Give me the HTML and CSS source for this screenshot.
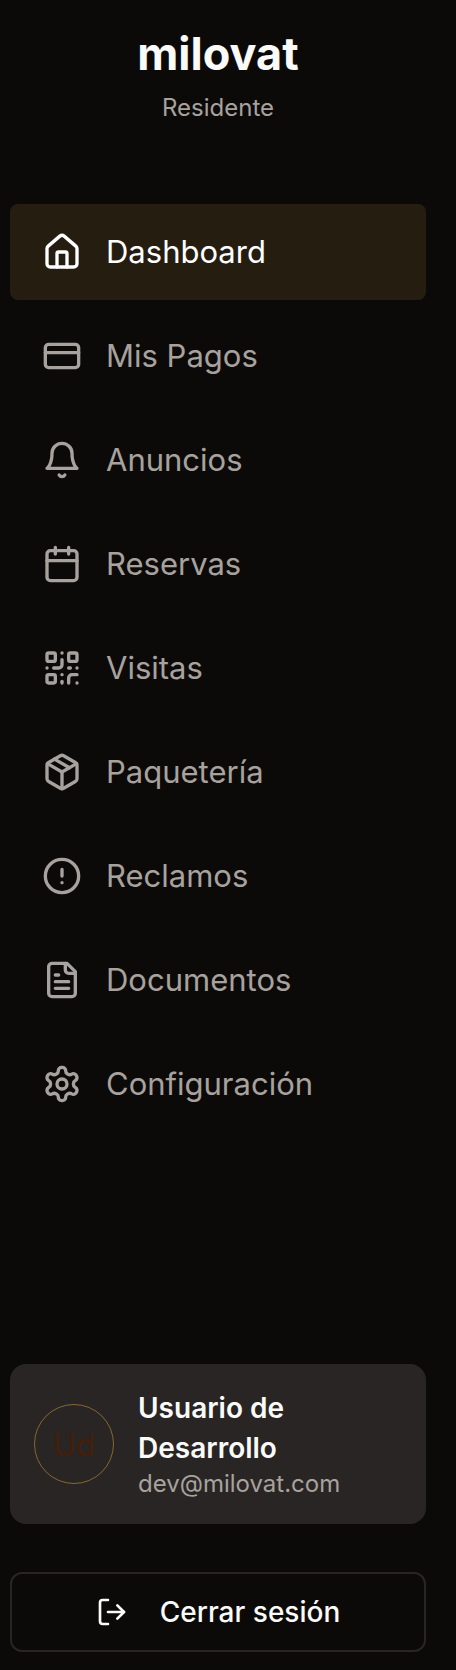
FILE: index.html
```html
<!DOCTYPE html>
<html lang="es">
<head>
<meta charset="utf-8">
<meta name="viewport" content="width=device-width, initial-scale=1">
<title>milovat</title>
<link rel="stylesheet" href="styles.css">
</head>
<body>
<aside class="sidebar">
  <header class="brand">
    <h1 class="brand-name">milovat</h1>
    <p class="brand-role">Residente</p>
  </header>
  <nav class="nav" aria-label="Principal">
    <a class="nav-link active" href="#dashboard" aria-current="page">
      <svg class="icon" viewBox="0 0 24 24" aria-hidden="true"><path d="M15 21v-8a1 1 0 0 0-1-1h-4a1 1 0 0 0-1 1v8"/><path d="M3 10a2 2 0 0 1 .709-1.528l7-5.999a2 2 0 0 1 2.582 0l7 5.999A2 2 0 0 1 21 10v9a2 2 0 0 1-2 2H5a2 2 0 0 1-2-2z"/></svg>
      <span>Dashboard</span>
    </a>
    <a class="nav-link" href="#pagos">
      <svg class="icon" viewBox="0 0 24 24" aria-hidden="true"><rect width="20" height="14" x="2" y="5" rx="2"/><path d="M2 10h20"/></svg>
      <span>Mis Pagos</span>
    </a>
    <a class="nav-link" href="#anuncios">
      <svg class="icon" viewBox="0 0 24 24" aria-hidden="true"><path d="M6 8a6 6 0 0 1 12 0c0 7 3 9 3 9H3s3-2 3-9"/><path d="M10.3 21a1.94 1.94 0 0 0 3.4 0"/></svg>
      <span>Anuncios</span>
    </a>
    <a class="nav-link" href="#reservas">
      <svg class="icon" viewBox="0 0 24 24" aria-hidden="true"><path d="M8 2v4M16 2v4"/><rect width="18" height="18" x="3" y="4" rx="2"/><path d="M3 10h18"/></svg>
      <span>Reservas</span>
    </a>
    <a class="nav-link" href="#visitas">
      <svg class="icon" viewBox="0 0 24 24" aria-hidden="true"><rect width="5" height="5" x="3" y="3" rx="1"/><rect width="5" height="5" x="16" y="3" rx="1"/><rect width="5" height="5" x="3" y="16" rx="1"/><path d="M21 16h-3a2 2 0 0 0-2 2v3"/><path d="M21 21v.01"/><path d="M12 7v3a2 2 0 0 1-2 2H7"/><path d="M3 12h.01"/><path d="M12 3h.01"/><path d="M12 16v.01"/><path d="M16 12h1"/><path d="M21 12v.01"/><path d="M12 21v-1"/></svg>
      <span>Visitas</span>
    </a>
    <a class="nav-link" href="#paqueteria">
      <svg class="icon" viewBox="0 0 24 24" aria-hidden="true"><path d="m7.5 4.27 9 5.15"/><path d="M21 8a2 2 0 0 0-1-1.73l-7-4a2 2 0 0 0-2 0l-7 4A2 2 0 0 0 3 8v8a2 2 0 0 0 1 1.73l7 4a2 2 0 0 0 2 0l7-4A2 2 0 0 0 21 16Z"/><path d="m3.3 7 8.7 5 8.7-5"/><path d="M12 22V12"/></svg>
      <span>Paquetería</span>
    </a>
    <a class="nav-link" href="#reclamos">
      <svg class="icon" viewBox="0 0 24 24" aria-hidden="true"><circle cx="12" cy="12" r="10"/><path d="M12 8v4M12 16h.01"/></svg>
      <span>Reclamos</span>
    </a>
    <a class="nav-link" href="#documentos">
      <svg class="icon" viewBox="0 0 24 24" aria-hidden="true"><path d="M15 2H6a2 2 0 0 0-2 2v16a2 2 0 0 0 2 2h12a2 2 0 0 0 2-2V7Z"/><path d="M14 2v4a2 2 0 0 0 2 2h4"/><path d="M10 9H8M16 13H8M16 17H8"/></svg>
      <span>Documentos</span>
    </a>
    <a class="nav-link" href="#configuracion">
      <svg class="icon" viewBox="0 0 24 24" aria-hidden="true"><path d="M12.22 2h-.44a2 2 0 0 0-2 2v.18a2 2 0 0 1-1 1.73l-.43.25a2 2 0 0 1-2 0l-.15-.08a2 2 0 0 0-2.73.73l-.22.38a2 2 0 0 0 .73 2.73l.15.1a2 2 0 0 1 1 1.72v.51a2 2 0 0 1-1 1.74l-.15.09a2 2 0 0 0-.73 2.73l.22.38a2 2 0 0 0 2.73.73l.15-.08a2 2 0 0 1 2 0l.43.25a2 2 0 0 1 1 1.73V20a2 2 0 0 0 2 2h.44a2 2 0 0 0 2-2v-.18a2 2 0 0 1 1-1.73l.43-.25a2 2 0 0 1 2 0l.15.08a2 2 0 0 0 2.73-.73l.22-.39a2 2 0 0 0-.73-2.73l-.15-.08a2 2 0 0 1-1-1.74v-.5a2 2 0 0 1 1-1.74l.15-.09a2 2 0 0 0 .73-2.73l-.22-.38a2 2 0 0 0-2.73-.73l-.15.08a2 2 0 0 1-2 0l-.43-.25a2 2 0 0 1-1-1.73V4a2 2 0 0 0-2-2z"/><circle cx="12" cy="12" r="3"/></svg>
      <span>Configuración</span>
    </a>
  </nav>
  <footer class="account">
    <div class="user-card">
      <div class="avatar" aria-hidden="true">Ud</div>
      <div class="user-info">
        <p class="user-name">Usuario de Desarrollo</p>
        <p class="user-email">dev@milovat.com</p>
      </div>
    </div>
    <button class="logout" type="button">
      <svg class="icon icon-small" viewBox="0 0 24 24" aria-hidden="true"><path d="M9 21H5a2 2 0 0 1-2-2V5a2 2 0 0 1 2-2h4"/><path d="m16 17 5-5-5-5"/><path d="M21 12H9"/></svg>
      <span>Cerrar sesión</span>
    </button>
  </footer>
</aside>
</body>
</html>
```
FILE: styles.css
```css
* {
  box-sizing: border-box;
}

body {
  margin: 0;
  background: #0c0a09;
  color: #fafaf9;
  font-family: Inter, "Liberation Sans", sans-serif;
}

h1,
p {
  margin: 0;
}

.sidebar {
  display: flex;
  flex-direction: column;
  min-height: 100vh;
  padding: 24px 30px 18px 10px;
}

.brand {
  display: flex;
  flex-direction: column;
  gap: 8px;
  padding-bottom: 80px;
  text-align: center;
}

.brand-name {
  font-size: 45px;
  line-height: 60px;
  font-weight: 700;
}

.brand-role {
  color: #a8a29e;
  font-size: 24px;
  line-height: 32px;
}

.nav {
  display: flex;
  flex: 1;
  flex-direction: column;
  gap: 8px;
}

.nav-link {
  display: flex;
  align-items: center;
  gap: 24px;
  padding: 24px 32px;
  border-radius: 8px;
  color: #a8a29e;
  font-size: 31px;
  line-height: 48px;
  text-decoration: none;
}

.nav-link.active {
  background: #261d11;
  color: #fff;
}

.icon {
  flex: none;
  width: 40px;
  height: 40px;
  fill: none;
  stroke: currentColor;
  stroke-width: 2;
  stroke-linecap: round;
  stroke-linejoin: round;
}

.icon-small {
  width: 32px;
  height: 32px;
}

.account {
  display: flex;
  flex-direction: column;
  gap: 48px;
}

.user-card {
  display: flex;
  align-items: center;
  gap: 24px;
  padding: 24px;
  border-radius: 16px;
  background: #292524;
}

.avatar {
  display: grid;
  flex: none;
  place-items: center;
  width: 80px;
  height: 80px;
  border: 1px solid #85682f;
  border-radius: 50%;
  color: #431f0b;
  font-size: 31px;
}

.user-info {
  flex: 1;
  min-width: 0;
}

.user-name {
  max-width: 200px;
  font-size: 28px;
  line-height: 40px;
  font-weight: 600;
}

.user-email {
  color: #a8a29e;
  font-size: 24px;
  line-height: 32px;
}

.logout {
  display: flex;
  align-items: center;
  justify-content: center;
  gap: 32px;
  padding: 18px 32px;
  border: 2px solid #292524;
  border-radius: 12px;
  background: transparent;
  color: #fafaf9;
  font: inherit;
  font-size: 28px;
  line-height: 40px;
  font-weight: 500;
}
```
